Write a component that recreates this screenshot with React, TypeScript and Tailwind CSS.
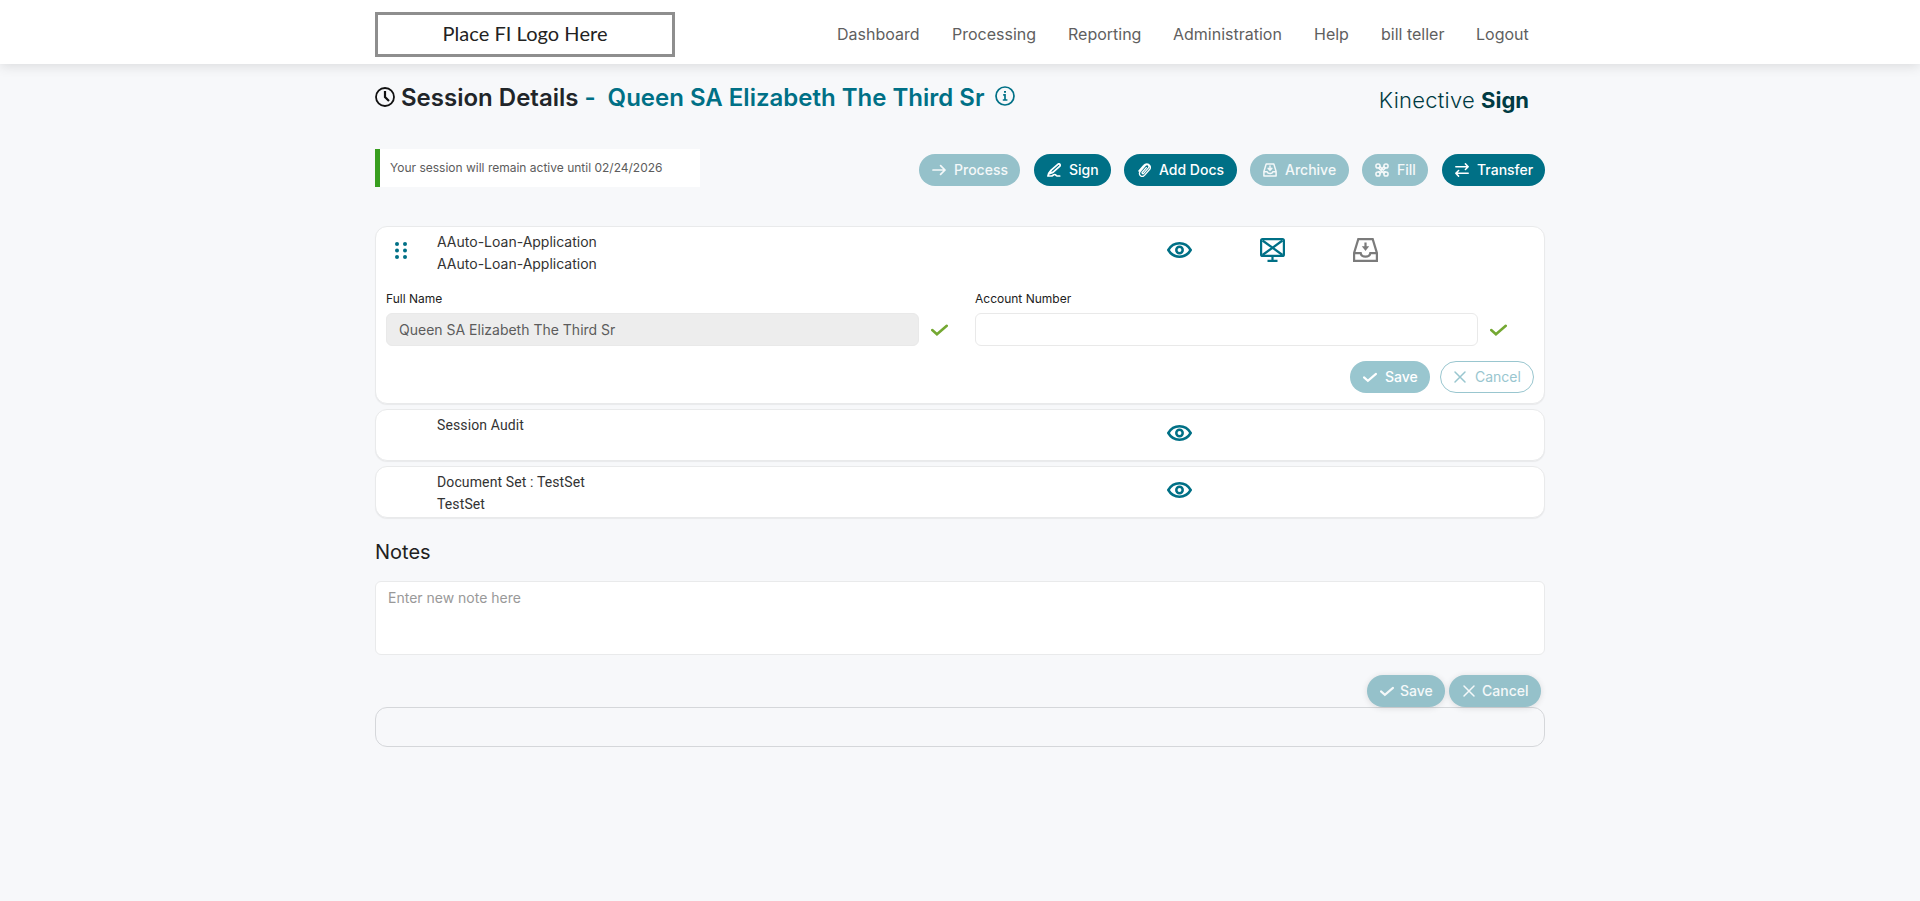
import React from 'react';

type IconName =
  | 'arrow'
  | 'sign'
  | 'clip'
  | 'archive'
  | 'command'
  | 'transfer'
  | 'check'
  | 'close';

const iconShapes: Record<IconName, React.ReactNode> = {
  arrow: <path d="M1 7h12M8.6 2.6 13 7l-4.4 4.4" strokeWidth="1.7" />,
  sign: (
    <>
      <path d="M4.200 7.200 10.800 1.300c.8-.7 1.600-.6 2.100 0 .5.700.3 1.400-.3 2L5.900 9.400l-3.700 1.400z" strokeWidth="1.700" />
      <path
        d="M3.800 7.600C2.200 9.300.9 11.300.9 13h3.300c1.700 0 1.900-1.500 3.600-1.500 1.400 0 1 1.500 2.400 1.500h2.500"
        strokeWidth="1.700"
      />
    </>
  ),
  clip: (
    <path
      d="m9.300 4.600-4 4.600c-.8 1 .6 2.100 1.400 1.200l4.700-5.500c1.700-2.100-1.200-4.600-3-2.500L3.200 8.500c-2.600 3.200 1.900 6.800 4.500 3.700l5.300-6.200c1.200-2.600-.6-4.900-3.200-5.100-1.300 0-2.200.5-3.100 1.600L1.900 8"
      strokeWidth="1.300"
    />
  ),
  archive: (
    <path d="M3.200.9h7.600l2.300 7.600v4.600H.9V8.500zM.9 8.800h3.300c.5 2.300 5.100 2.300 5.600 0h3.300M7 3v4M5.200 5.400 7 7.200l1.800-1.800" />
  ),
  command: (
    <>
      <circle cx="3" cy="3" r="2.100" />
      <circle cx="11" cy="3" r="2.100" />
      <circle cx="3" cy="11" r="2.100" />
      <circle cx="11" cy="11" r="2.100" />
      <path d="m3.600 5 5.400 5.400M5 3.600l5.400 5.400M10.400 5 5 10.400M9 3.600 3.600 9" />
    </>
  ),
  transfer: (
    <path d="M.8 3.700h12.400M10.400.9l2.800 2.800-2.800 2.800M13.200 10.300H.8M3.600 7.500.8 10.300l2.800 2.800" />
  ),
  check: <path d="M1 7.400 4.900 10.900 13 3.900" strokeWidth="2.100" strokeLinejoin="miter" />,
  close: <path d="m2 2 10 10M12 2 2 12" />,
};

function Icon({ name, className = 'size-3.5' }: { name: IconName; className?: string }) {
  return (
    <svg
      viewBox="0 0 14 14"
      fill="none"
      stroke="currentColor"
      strokeWidth="1.5"
      strokeLinecap="round"
      strokeLinejoin="round"
      className={`shrink-0 ${className}`}
    >
      {iconShapes[name]}
    </svg>
  );
}

function EyeIcon() {
  return (
    <svg viewBox="0 0 25 16" fill="none" stroke="#007086" className="h-4 w-[25px]">
      <path
        d="M1.300 8C3.800 3.700 7.600 1.300 12.500 1.300S21.200 3.700 23.700 8c-2.500 4.300-6.300 6.700-11.200 6.700S3.800 12.300 1.300 8z"
        strokeWidth="2.500"
      />
      <circle cx="12.500" cy="8" r="3.200" strokeWidth="2.500" />
    </svg>
  );
}

function ScreenOffIcon() {
  return (
    <svg viewBox="0 0 25 24" fill="none" stroke="#007086" strokeWidth="2.200" className="h-6 w-[25px]">
      <rect x="1.100" y="1.100" width="22.800" height="16.800" rx="1.500" />
      <path d="m2.500 2.500 20 14.500M22.500 2.500 2.500 17M12.500 18v5M7.500 22.900h10" />
    </svg>
  );
}

function InboxIcon() {
  return (
    <svg viewBox="0 0 25 24" fill="none" stroke="#7b7b7b" strokeWidth="2.200" className="h-6 w-[25px]">
      <path d="M5.300 1.100h14.400L23.900 15v7.900H1.100V15zM1.100 15.200h6.600c.7 4.600 8.900 4.600 9.600 0h6.600M12.500 4.500V10" />
      <path d="M8.800 8.200h7.400L12.500 13z" fill="#7b7b7b" stroke="none" />
    </svg>
  );
}

function DragHandle() {
  return (
    <svg viewBox="0 0 12 17" fill="#007086" className="h-[17px] w-3">
      {[2, 8.5, 15].map((y) => (
        <React.Fragment key={y}>
          <circle cx="2" cy={y} r="2" />
          <circle cx="10" cy={y} r="2" />
        </React.Fragment>
      ))}
    </svg>
  );
}

const navItems = [
  { label: 'Dashboard', width: 'w-[83px]' },
  { label: 'Processing', width: 'w-[84px]' },
  { label: 'Reporting', width: 'w-[73px]' },
  { label: 'Administration', width: 'w-[109px]' },
  { label: 'Help', width: 'w-[35px]' },
  { label: 'bill teller', width: 'w-[63px]' },
  { label: 'Logout', width: 'w-[53px]' },
];

const actions: { label: string; icon: IconName; enabled: boolean; size: string }[] = [
  { label: 'Process', icon: 'arrow', enabled: false, size: 'w-[101px] mr-3.5' },
  { label: 'Sign', icon: 'sign', enabled: true, size: 'w-[77px] mr-[13px]' },
  { label: 'Add Docs', icon: 'clip', enabled: true, size: 'w-[113px] mr-[13px]' },
  { label: 'Archive', icon: 'archive', enabled: false, size: 'w-[99px] mr-[13px]' },
  { label: 'Fill', icon: 'command', enabled: false, size: 'w-[66px] mr-3.5' },
  { label: 'Transfer', icon: 'transfer', enabled: true, size: 'w-[103px]' },
];

const cardClass =
  'rounded-xl border border-[#e9eaeb] bg-white shadow-[0_1px_1px_rgba(0,0,0,0.06)]';

function DocumentRow({
  lines,
  draggable = false,
  fontClass = '',
}: {
  lines: string[];
  draggable?: boolean;
  fontClass?: string;
}) {
  return (
    <div className="flex h-[50px]">
      <div className="w-[61px] pt-[15px] pl-[19px]">{draggable && <DragHandle />}</div>
      <div className={`w-[730px] pt-1 text-sm leading-[22px] text-[#333] ${fontClass}`}>
        {lines.map((line, i) => (
          <div key={i}>{line}</div>
        ))}
      </div>
      <div className="flex h-12 items-center gap-[68px] pb-0.5">
        <EyeIcon />
        {draggable && (
          <>
            <ScreenOffIcon />
            <InboxIcon />
          </>
        )}
      </div>
    </div>
  );
}

export default function App() {
  return (
    <div className="min-h-screen bg-[#f7f8fa] font-['Inter',sans-serif] text-[#212529]">
      <header className="relative h-16 bg-white shadow-[0_2px_12px_rgba(0,0,0,0.12)]">
        <div className="mx-auto flex h-16 w-[1170px] justify-between pr-4">
          <div className="mt-3 flex h-[45px] w-[300px] items-center justify-center border-3 border-[#8e8e8e] pb-1 font-['Lato',sans-serif] text-[20px] tracking-[0.05px] text-[#222]">
            Place FI Logo Here
          </div>
          <nav className="flex items-center gap-8 pt-1 text-base text-[#5f5f5f]">
            {navItems.map((item) => (
              <a key={item.label} className={`whitespace-nowrap ${item.width}`}>
                {item.label}
              </a>
            ))}
          </nav>
        </div>
      </header>

      <main className="mx-auto w-[1170px]">
        <div className="flex h-[85px] justify-between pt-4 pr-4">
          <h1 className="flex h-9 items-center text-2xl font-semibold">
            <svg
              viewBox="0 0 20 20"
              fill="none"
              stroke="#111"
              strokeWidth="1.800"
              className="mr-1.5 mb-0.5 size-5"
            >
              <circle cx="10" cy="10" r="9" />
              <path d="M10 4v6l4 4" strokeWidth="2.200" />
            </svg>
            Session Details
            <span className="ml-1.5 text-[#007086]">-</span>
            <span className="ml-3 text-[#007086]">Queen SA Elizabeth The Third Sr</span>
            <svg
              viewBox="0 0 20 20"
              fill="none"
              stroke="#007086"
              strokeWidth="1.700"
              className="mb-1 ml-[11px] size-5"
            >
              <circle cx="10" cy="10" r="9" />
              <path d="M8.200 8.800H10v5M7.800 14h4.600M9 5.800h2" />
            </svg>
          </h1>
          <div className="flex h-10 items-center text-[22px] whitespace-nowrap text-[#003b43]">
            <span className="font-light tracking-[0.25px]">Kinective</span>
            <span className="ml-1.5 font-bold">Sign</span>
          </div>
        </div>

        <div className="flex h-[77px] justify-between">
          <div className="flex h-[38px] w-[325px] items-center border-l-5 border-[#389e1f] bg-white pl-2.5 text-xs text-[#5c5c5c]">
            Your session will remain active until 02/24/2026
          </div>
          <div className="flex pt-[5px]">
            {actions.map((action) => (
              <button
                key={action.label}
                className={`flex h-8 items-center gap-2 rounded-full pl-[13px] text-sm font-medium whitespace-nowrap ${action.size} ${
                  action.enabled ? 'bg-[#007086] text-white' : 'bg-[#95c1ca] text-[#f4f8f9]'
                }`}
              >
                <Icon name={action.icon} />
                {action.label}
              </button>
            ))}
          </div>
        </div>

        <section className={`${cardClass} h-[178px]`}>
          <DocumentRow lines={['AAuto-Loan-Application', 'AAuto-Loan-Application']} draggable />
          <div className="flex px-2.5 pt-[13px]">
            <div className="w-[589px]">
              <label className="block h-[23px] text-xs leading-[18px] text-[#212121]">
                Full Name
              </label>
              <div className="flex items-center gap-3">
                <div className="flex h-[33px] w-[533px] items-center rounded-md border border-[#e9e9e9] bg-[#ededed] px-3 text-sm text-[#5c5c5c]">
                  Queen SA Elizabeth The Third Sr
                </div>
                <Icon name="check" className="size-[17px] text-[#74a832]" />
              </div>
            </div>
            <div>
              <label className="block h-[23px] text-xs leading-[18px] text-[#212121]">
                Account Number
              </label>
              <div className="flex items-center gap-3">
                <input className="h-[33px] w-[503px] rounded-md border border-[#e9e9e9] bg-white px-3 text-sm" />
                <Icon name="check" className="size-[17px] text-[#74a832]" />
              </div>
            </div>
          </div>
          <div className="mt-[15px] flex justify-end gap-2.5 pr-2.5 text-sm font-medium">
            <button className="flex h-8 w-20 items-center gap-2 rounded-full bg-[#99c6cf] pl-[13px] text-white">
              <Icon name="check" />
              Save
            </button>
            <button className="flex h-8 w-[94px] items-center gap-2 rounded-full border border-[#99c6cf] pl-3 font-normal text-[#99c6cf]">
              <Icon name="close" />
              Cancel
            </button>
          </div>
        </section>

        <section className={`${cardClass} mt-[5px] h-[52px]`}>
          <DocumentRow
            lines={['Session Audit']}
            fontClass="font-['Roboto',sans-serif] tracking-[0.12px]"
          />
        </section>
        <section className={`${cardClass} mt-[5px] h-[52px]`}>
          <DocumentRow
            lines={['Document Set : TestSet', 'TestSet']}
            fontClass="font-['Roboto',sans-serif] tracking-[0.12px]"
          />
        </section>

        <h2 className="mt-[19px] mb-[14px] text-xl leading-[30px] text-[#212121]">Notes</h2>
        <textarea
          placeholder="Enter new note here"
          className="block h-[74px] w-full resize-none rounded-md border border-[#e9eaeb] bg-white px-3 pt-1.5 text-sm placeholder:text-[#999]"
        />
        <div className="mt-5 flex justify-end gap-1 pr-1 text-sm font-medium text-[#f4f8f9]">
          <button className="flex h-8 w-[78px] items-center gap-1.5 rounded-full bg-[#95c1ca] pl-[13px] shadow-[0_1px_6px_rgba(0,0,0,0.12)]">
            <Icon name="check" />
            Save
          </button>
          <button className="flex h-8 w-[92px] items-center gap-1.5 rounded-full bg-[#95c1ca] pl-[13px] shadow-[0_1px_6px_rgba(0,0,0,0.12)]">
            <Icon name="close" />
            Cancel
          </button>
        </div>
        <div className="h-10 rounded-xl border border-[#d5d7da]" />
      </main>
    </div>
  );
}
